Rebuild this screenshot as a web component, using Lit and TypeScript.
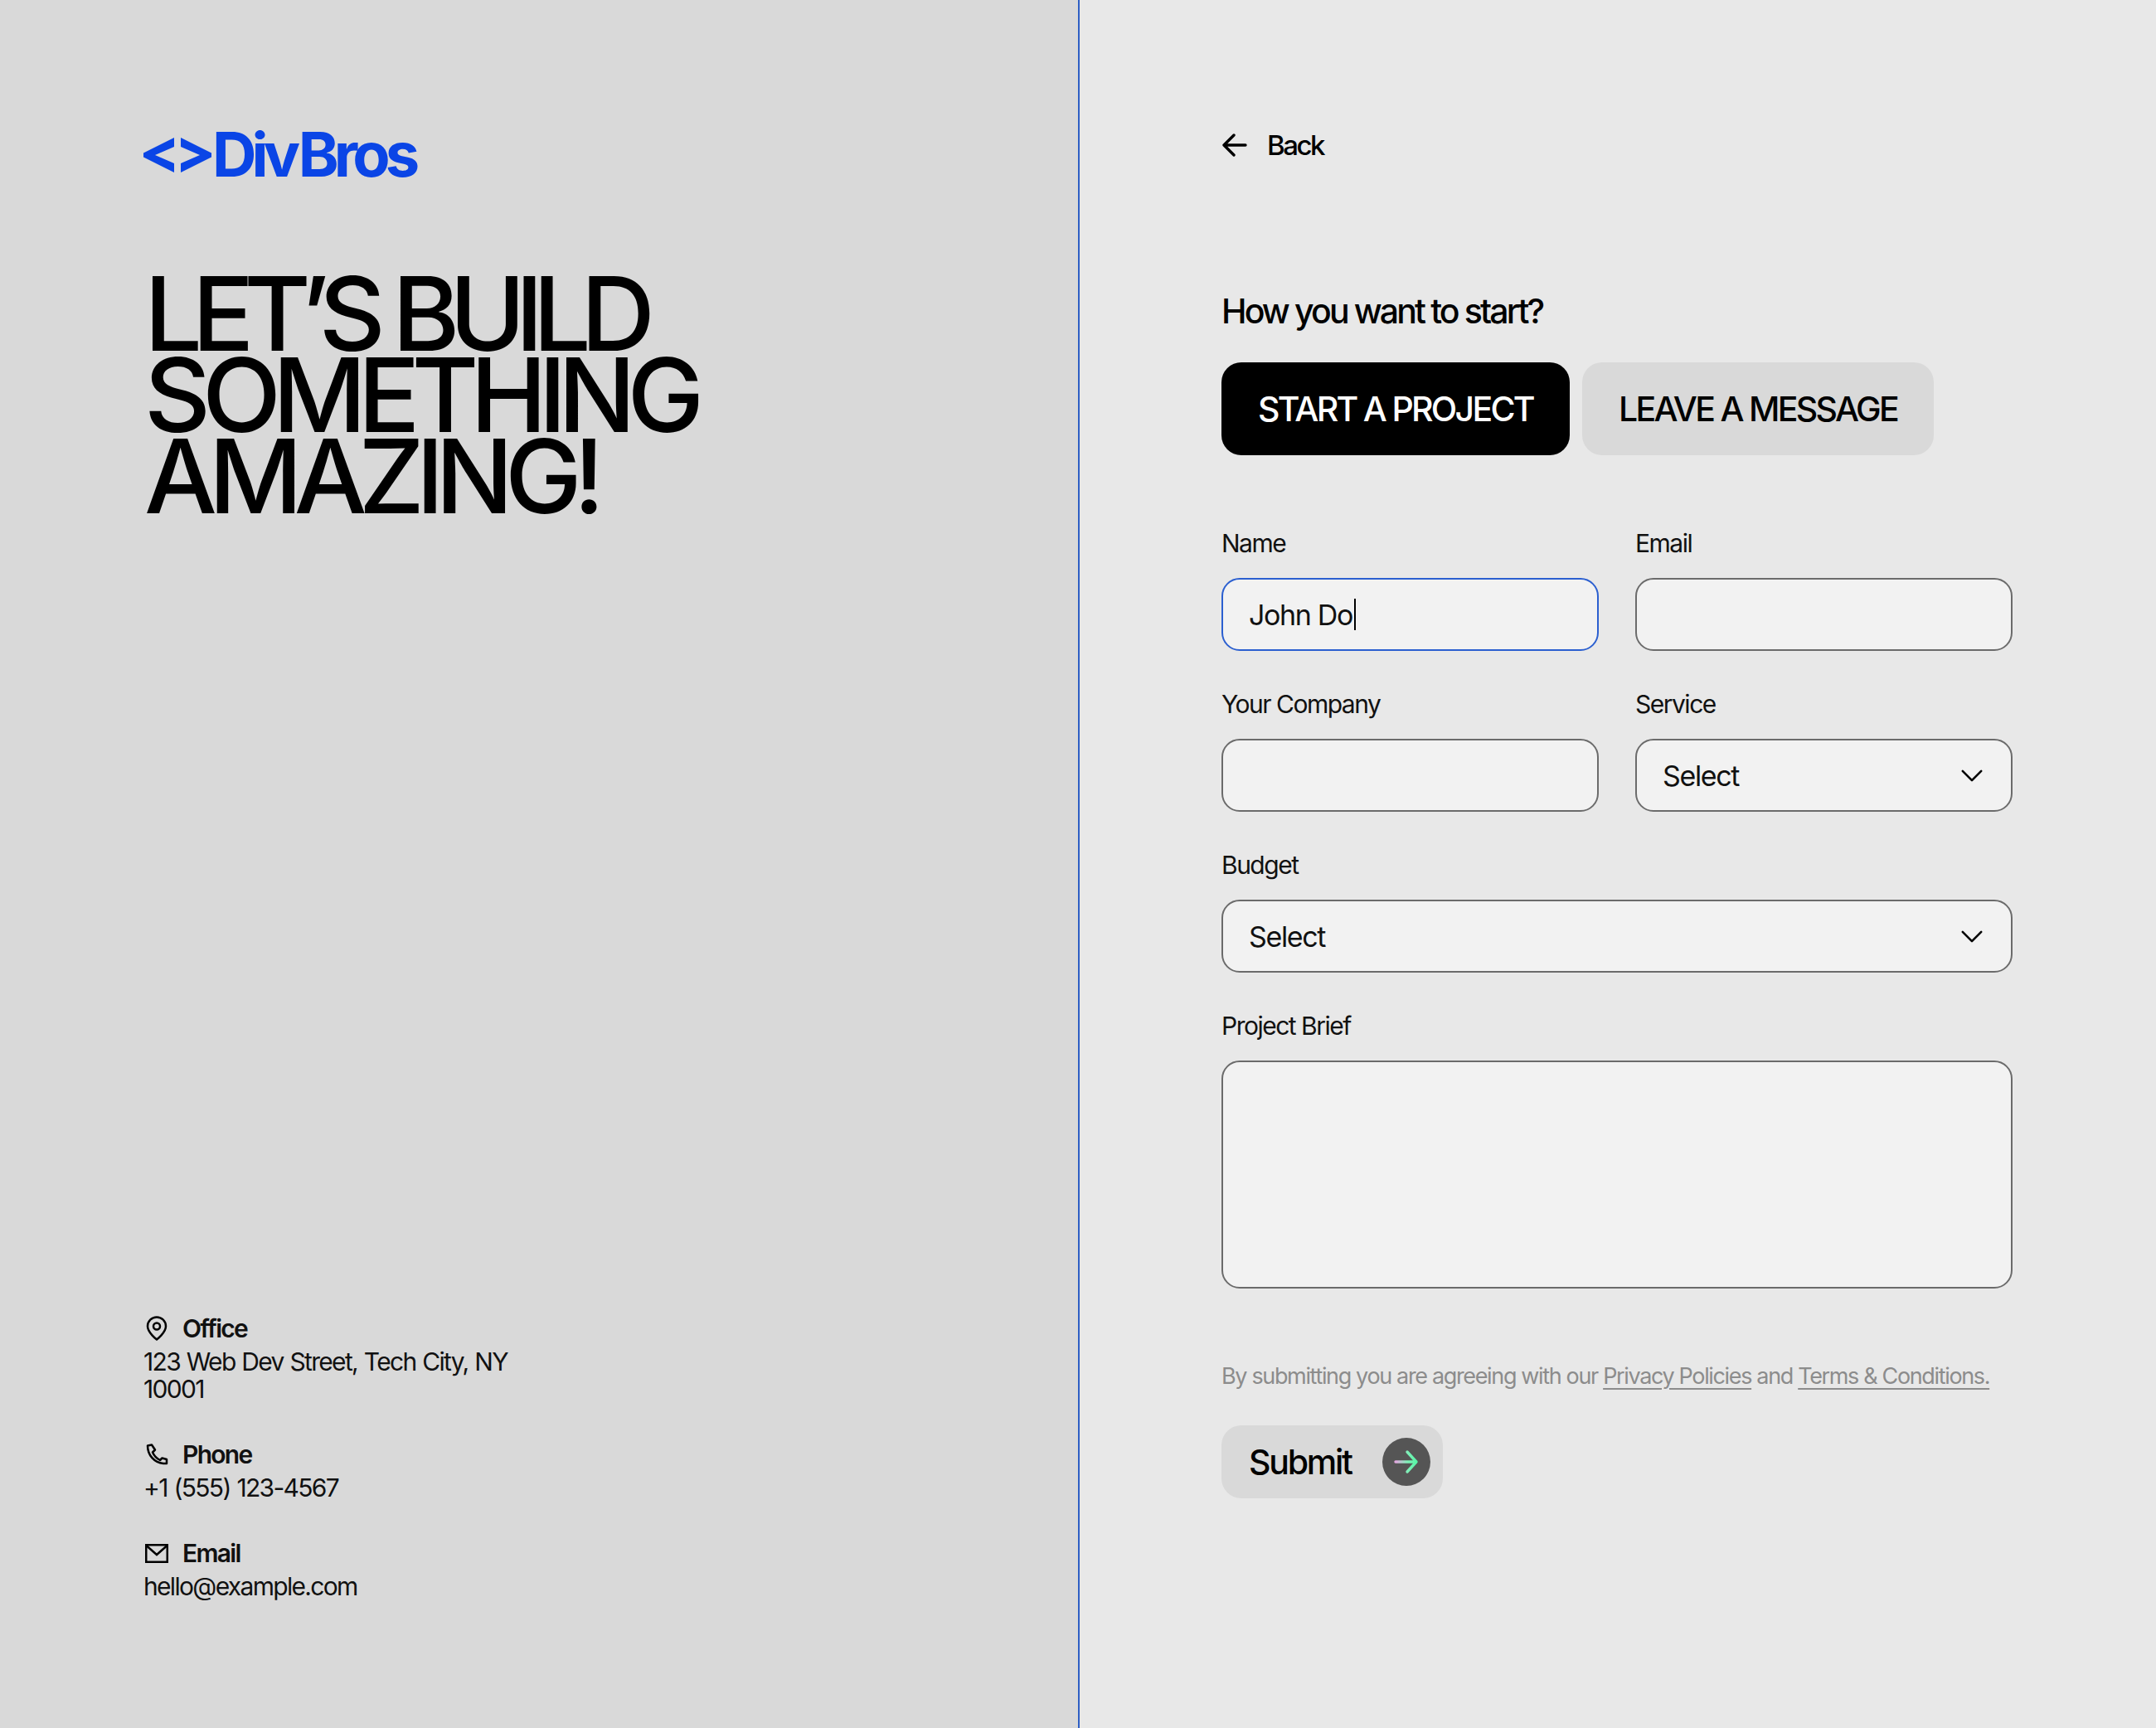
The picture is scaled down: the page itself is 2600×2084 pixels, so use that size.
import { LitElement, html, css, svg } from "lit";
import { customElement } from "lit/decorators.js";

const chevron = html`<svg class="chev" viewBox="0 0 30 18" fill="none" stroke="#000" stroke-width="2.8" stroke-linecap="round" stroke-linejoin="round"><path d="M3 3 L15 15 L27 3"/></svg>`;

@customElement("app-root")
export class AppRoot extends LitElement {
  static styles = css`
    :host { display: block; font-family: Inter, "Liberation Sans", sans-serif; color: #000; }
    * { box-sizing: border-box; }
    .page { display: grid; grid-template-columns: 1300px 1fr; width: 2600px; height: 2084px; }
    .left { background: #d9d9d9; padding: 150px 0 154px 173px; display: flex; flex-direction: column; justify-content: space-between; }
    .logo { display: flex; align-items: center; gap: 1px; height: 72px; color: #0a45e6; font-size: 74px; font-weight: 700; letter-spacing: -0.08em; line-height: 72px; }
    .logo svg { width: 82px; height: 42px; flex: none; margin-top: 2px; }
    .logo b { font-weight: 700; margin-left: 0.05em; }
    h1 { margin: 107px 0 0 1px; font-size: 124px; line-height: 98px; font-weight: 500; letter-spacing: -0.082em; }
    h1 span { display: block; }
    h1 .first { letter-spacing: -0.1em; }
    .contacts { display: flex; flex-direction: column; gap: 38px; width: 450px; font-size: 30px; line-height: 33px; letter-spacing: -0.056em; word-spacing: 1px; color: #111; }
    .contact-head { display: flex; align-items: center; gap: 17px; font-weight: 600; height: 48px; letter-spacing: -0.057em; }
    .contact-head svg { width: 30px; height: 30px; flex: none; }
    .right { background: #e8e8e8; border-left: 2px solid #2f5fc4; padding: 150px 171px 0 171px; }
    .back { display: flex; align-items: center; gap: 24px; height: 50px; font-size: 33px; font-weight: 500; letter-spacing: -0.075em; }
    .back svg { width: 30px; height: 30px; margin-left: 1px; }
    h2 { margin: 150px 0 0; font-size: 41px; line-height: 50px; font-weight: 500; letter-spacing: -0.07em; }
    .tabs { display: flex; gap: 15px; margin-top: 37px; }
    .tab { height: 112px; padding: 0 44px; border-radius: 24px; border: 0; font: inherit; font-size: 41px; font-weight: 500; letter-spacing: -0.066em; display: flex; align-items: center; background: #d9d9d9; color: #000; }
    .tab.on { background: #000; color: #fff; }
    .form { display: grid; grid-template-columns: 455px 455px; column-gap: 44px; row-gap: 47px; margin-top: 89px; width: 954px; }
    .f { display: flex; flex-direction: column; gap: 25px; }
    .wide { grid-column: 1 / 3; }
    label { font-size: 30px; line-height: 34px; height: 34px; letter-spacing: -0.05em; color: #111; }
    .box { height: 88px; border: 2px solid #6b6b6b; border-radius: 22px; background: #f2f2f2; padding: 0 31px; font: inherit; font-size: 34px; letter-spacing: -0.04em; color: #111; display: flex; align-items: center; justify-content: space-between; width: 100%; outline: none; }
    .box.focus { border-color: #2b5fd0; justify-content: flex-start; }
    .caret { width: 2px; height: 38px; background: #000; margin-left: 2px; }
    textarea.box { height: 275px; resize: none; display: block; }
    .chev { width: 28px; height: 17px; margin-right: 2px; }
    .note { margin: 89px 0 0; font-size: 27px; line-height: 34px; letter-spacing: -0.05em; color: #8c8c8c; white-space: nowrap; }
    .note a { color: inherit; text-decoration: underline; text-underline-offset: 5px; }
    .submit { margin-top: 42px; height: 88px; width: 267px; padding: 0 15px 0 33px; display: flex; align-items: center; justify-content: space-between; background: #d9d9d9; border: 0; border-radius: 24px; font: inherit; font-size: 41px; font-weight: 500; letter-spacing: -0.055em; color: #000; }
    .go { width: 58px; height: 58px; border-radius: 50%; background: #555; display: flex; align-items: center; justify-content: center; }
    .go svg { width: 30px; height: 30px; }
  `;

  render() {
    return html`<div class="page">
      <section class="left">
        <div>
          <div class="logo">
            <svg viewBox="0 0 82 42" fill="#0a45e6"><path d="M37 0V11L14 21L37 31V42L0 23.500V18.500Z"/><path d="M45 0V11L68 21L45 31V42L82 23.500V18.500Z"/></svg>
            <span>Div<b>Bros</b></span>
          </div>
          <h1><span class="first">LET’S BUILD</span><span>SOMETHING</span><span>AMAZING!</span></h1>
        </div>
        <div class="contacts">
          <div>
            <div class="contact-head">
              <svg viewBox="0 0 30 30" fill="none" stroke="#000" stroke-width="2.500" stroke-linejoin="round"><path d="M16 28.500C16 28.500 27 20 27 12.500A11 11 0 0 0 5 12.500C5 20 16 28.500 16 28.500Z"/><circle cx="16" cy="12.500" r="4"/></svg>
              Office
            </div>
            <div>123 Web Dev Street, Tech City, NY 10001</div>
          </div>
          <div>
            <div class="contact-head">
              <svg viewBox="0 0 30 30" fill="none" stroke="#000" stroke-width="2.500" stroke-linejoin="round"><path d="M5 4.500L10 3.500L14 9.500L11 12.500C13 17 16 20 20 22L22.500 19.500L28 21V26H24C13 25 5 16 5 4.500Z"/></svg>
              Phone
            </div>
            <div>+1 (555) 123-4567</div>
          </div>
          <div>
            <div class="contact-head">
              <svg viewBox="0 0 30 30" fill="none" stroke="#000" stroke-width="2.500"><path d="M3.250 5.250H28.750V25.750H3.250Z"/><path d="M3.500 6L16 17L28.500 6"/></svg>
              Email
            </div>
            <div>hello@example.com</div>
          </div>
        </div>
      </section>
      <section class="right">
        <div class="back">
          <svg viewBox="0 0 30 30" fill="none" stroke="#000" stroke-width="3.400" stroke-linecap="round" stroke-linejoin="round"><path d="M28 15H3M14 3L2 15L14 27"/></svg>
          Back
        </div>
        <h2>How you want to start?</h2>
        <div class="tabs">
          <button class="tab on">START A PROJECT</button>
          <button class="tab">LEAVE A MESSAGE</button>
        </div>
        <div class="form">
          <div class="f"><label>Name</label><div class="box focus">John Do<span class="caret"></span></div></div>
          <div class="f"><label>Email</label><input class="box" /></div>
          <div class="f"><label>Your Company</label><input class="box" /></div>
          <div class="f"><label>Service</label><div class="box">Select ${chevron}</div></div>
          <div class="f wide"><label>Budget</label><div class="box">Select ${chevron}</div></div>
          <div class="f wide"><label>Project Brief</label><textarea class="box"></textarea></div>
        </div>
        <p class="note">By submitting you are agreeing with our <a>Privacy Policies</a> and <a>Terms &amp; Conditions.</a></p>
        <button class="submit">
          Submit
          <span class="go">
            <svg viewBox="0 0 30 30" fill="none" stroke-width="3.400" stroke-linecap="round" stroke-linejoin="round">
              <defs><linearGradient id="g" gradientUnits="userSpaceOnUse" x1="2" y1="15" x2="28" y2="15"><stop offset="0" stop-color="#e3a6e0"/><stop offset="0.55" stop-color="#7ff0b8"/><stop offset="1" stop-color="#55f5a5"/></linearGradient></defs>
              ${svg`<path d="M2 15H27M16 3L27 15L16 27" stroke="url(#g)"/>`}
            </svg>
          </span>
        </button>
      </section>
    </div>`;
  }
}
